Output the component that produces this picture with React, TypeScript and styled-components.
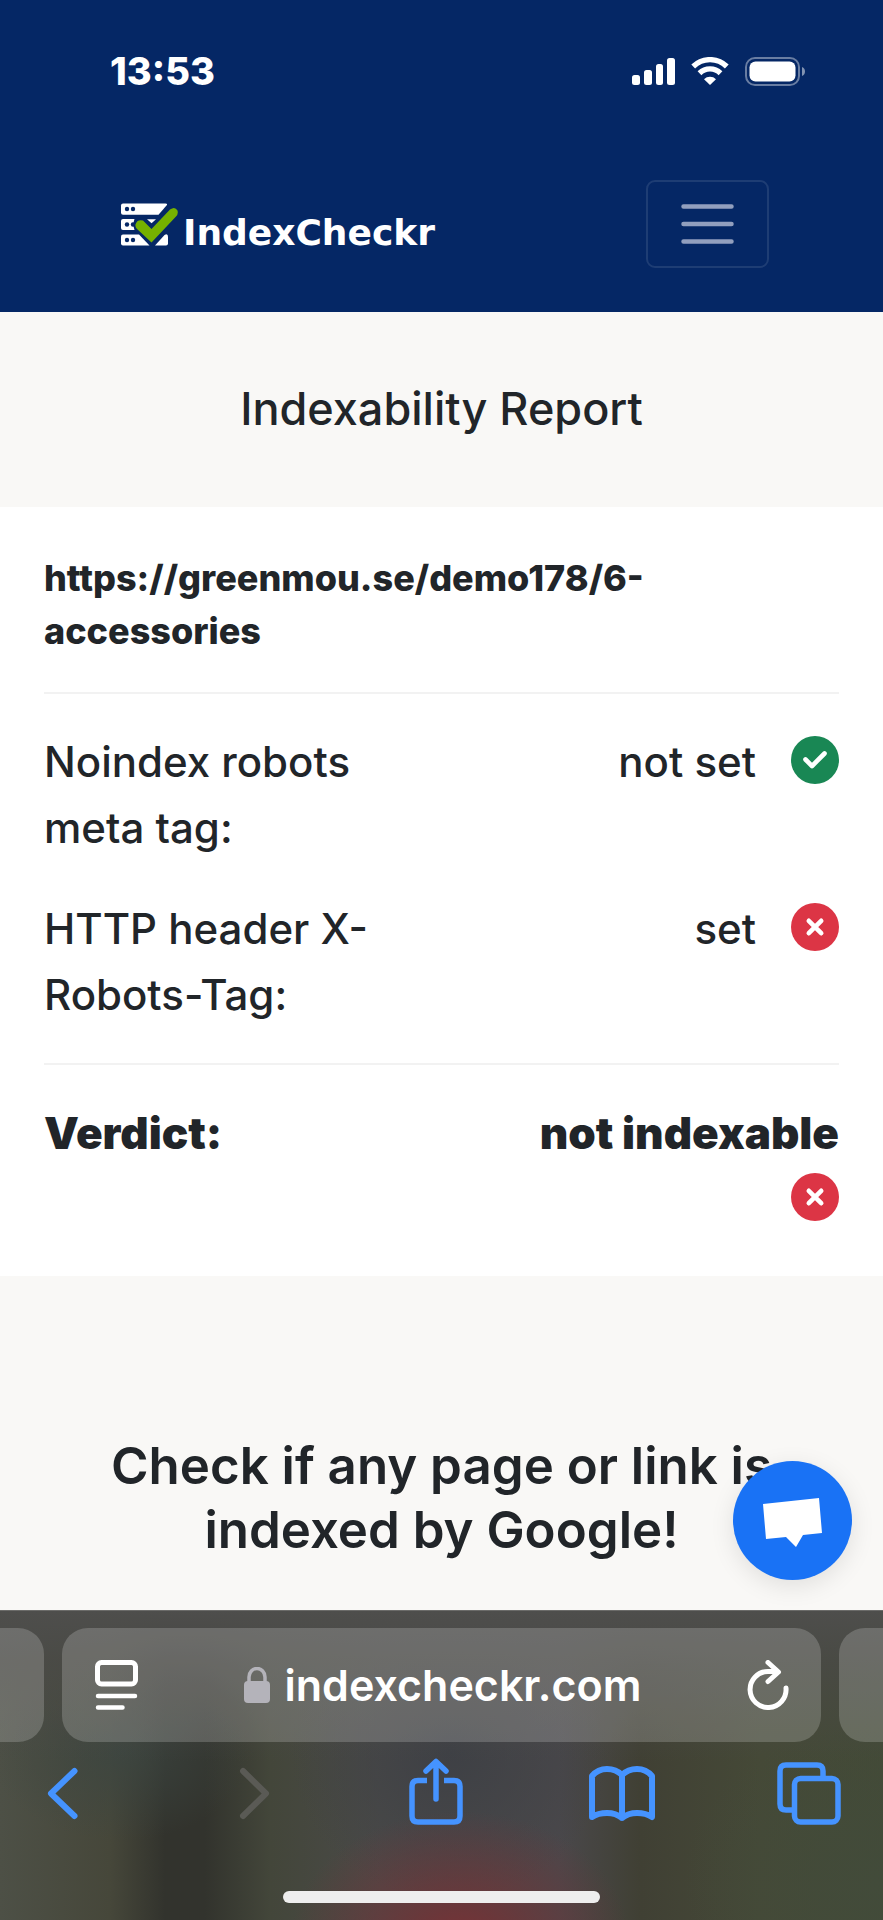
import React from "react";
import styled, { createGlobalStyle } from "styled-components";

const GlobalStyle = createGlobalStyle`
  * { box-sizing: border-box; }
  body { margin: 0; background: #f9f8f6; color: #212529; font-family: Inter, "Liberation Sans", sans-serif; }
  h1, h2, p, dl, dd, dt { margin: 0; }
  button { padding: 0; border: 0; background: none; color: inherit; font: inherit; }
  svg { display: block; flex: none; }
`;

const Page = styled.div`
  display: flex;
  flex-direction: column;
  min-height: 100vh;
`;

const Header = styled.header`
  background: #052765;
  color: #fff;
`;

const StatusBar = styled.div`
  display: flex;
  align-items: center;
  justify-content: space-between;
  padding: 47px 77px 0 110px;
`;

const Clock = styled.time`
  font-size: 38px;
  line-height: 48px;
  font-weight: 800;
`;

const StatusIcons = styled.div`
  display: flex;
  align-items: center;
  gap: 16px;
`;

const NavBar = styled.nav`
  display: flex;
  align-items: center;
  justify-content: space-between;
  padding: 85px 114px 44px 120px;
`;

const Brand = styled.a`
  display: flex;
  align-items: center;
  gap: 5px;
  color: #fff;
  text-decoration: none;
`;

const BrandName = styled.span`
  padding-top: 18px;
  font-family: "DejaVu Sans", sans-serif;
  font-size: 36px;
  line-height: 44px;
  font-weight: 700;
`;

const MenuButton = styled.button`
  display: grid;
  place-items: center;
  width: 123px;
  height: 88px;
  border: 2px solid rgba(255, 255, 255, 0.1);
  border-radius: 9px;
`;

const ReportTitle = styled.h1`
  padding: 69px 45px 70px;
  font-size: 45px;
  line-height: 56px;
  font-weight: 500;
  text-align: center;
`;

const Report = styled.main`
  padding: 45px 44px 55px;
  background: #fff;
`;

const CheckedUrl = styled.p`
  padding-bottom: 34px;
  border-bottom: 2px solid #f2f2f2;
  font-size: 36px;
  line-height: 53px;
  font-weight: 850;
`;

const Checks = styled.dl`
  display: grid;
  gap: 35px;
  padding: 35px 0;
  border-bottom: 2px solid #f2f2f2;
`;

const CheckRow = styled.div`
  display: grid;
  grid-template-columns: 1fr 1fr;
  font-size: 42px;
  line-height: 66px;
  font-weight: 500;
`;

const CheckValue = styled.dd`
  display: flex;
  justify-content: flex-end;
  gap: 35px;
`;

const BadgeBox = styled.span`
  padding-top: 7px;
`;

const Verdict = styled.dl`
  display: flex;
  justify-content: space-between;
  padding-top: 35px;
  font-size: 44px;
  line-height: 66px;
  font-weight: 900;
`;

const VerdictValue = styled.dd`
  display: flex;
  flex-direction: column;
  align-items: flex-end;
`;

const Promo = styled.section`
  position: relative;
  flex: 1;
  padding: 158px 88px 46px;
`;

const PromoTitle = styled.h2`
  max-width: 700px;
  margin: 0 auto;
  font-size: 51px;
  line-height: 64px;
  font-weight: 600;
  text-align: center;
`;

const ChatButton = styled.button`
  position: absolute;
  right: 31px;
  bottom: 30px;
  display: grid;
  place-items: center;
  width: 119px;
  height: 119px;
  border-radius: 50%;
  background: #1972f5;
  box-shadow: 0 6px 24px rgba(0, 0, 0, 0.1);
`;

const Browser = styled.footer`
  border-top: 1px solid #6b6b69;
  background:
    linear-gradient(to bottom, #4e4e4c 0, rgba(74, 74, 71, 0.8) 50px, rgba(60, 60, 55, 0) 150px),
    radial-gradient(170px 130px at 460px 330px, #783236 0, rgba(115, 50, 54, 0.8) 25%, rgba(90, 60, 62, 0) 100%),
    radial-gradient(160px 150px at 450px 140px, #3e4045 0, rgba(70, 70, 75, 0) 100%),
    radial-gradient(130px 90px at 120px 140px, rgba(60, 70, 66, 0.8) 0, rgba(60, 70, 66, 0) 100%),
    radial-gradient(200px 160px at 883px 270px, #424b3a 0, rgba(66, 75, 58, 0) 100%),
    linear-gradient(to right, #4d5046 0, #46473a 110px, #32332d 165px, #32332d 205px, #43463a 270px, #4a4a48 380px, #4a484b 560px, #404034 640px, #454937 760px, #434a37 100%);
`;

const Tabs = styled.div`
  display: grid;
  grid-template-columns: 44px 1fr 44px;
  gap: 18px;
  padding-top: 17px;
`;

const TabEdge = styled.div<{ $side: "left" | "right" }>`
  border-radius: ${(p) => (p.$side === "left" ? "0 26px 26px 0" : "26px 0 0 26px")};
  background: rgba(255, 255, 255, 0.19);
`;

const AddressBar = styled.div`
  display: flex;
  align-items: center;
  justify-content: space-between;
  height: 114px;
  padding: 0 32px 0 33px;
  border-radius: 26px;
  background: rgba(255, 255, 255, 0.19);
  color: #fff;
`;

const Address = styled.button`
  display: flex;
  align-items: center;
  gap: 15px;
  font-size: 43px;
  line-height: 56px;
  font-weight: 600;
`;

const Tools = styled.div`
  display: flex;
  align-items: center;
  justify-content: space-between;
  padding: 16px 41px 0 29px;
`;

const Tool = styled.button`
  display: grid;
  justify-content: center;
  width: 66px;
  color: #4593ff;
  &:disabled { color: #5a5a55; }
`;

const HomeBar = styled.div`
  width: 36%;
  height: 12px;
  margin: 63px auto 17px;
  border-radius: 6px;
  background: #eee;
`;

const Badge = ({ ok }: { ok?: boolean }) => (
  <BadgeBox>
    <svg width="48" height="48" viewBox="0 0 48 48" role="img" aria-label={ok ? "Passed" : "Failed"}>
      <circle cx="24" cy="24" r="24" fill={ok ? "#198754" : "#dc3545"} />
      <path
        d={ok ? "M14.500 23.500l6.500 6.500 12.500-12.500" : "M17.800 17.800l12.400 12.400M30.200 17.800l-12.400 12.400"}
        fill="none" stroke="#fff" strokeWidth="4.600" strokeLinecap="round" strokeLinejoin="round"
      />
    </svg>
  </BadgeBox>
);

const Signal = () => (
  <svg width="43" height="27" viewBox="0 0 43 27" fill="#fff">
    <rect y="17" width="8" height="10" rx="2.5" />
    <rect x="12" y="12" width="8" height="15" rx="2.5" />
    <rect x="24" y="6" width="7" height="21" rx="2.5" />
    <rect x="35" width="8" height="27" rx="2.5" />
  </svg>
);

const Wifi = () => (
  <svg width="38" height="28" viewBox="0 0 38 28" fill="none" stroke="#fff" strokeWidth="5.400">
    <path d="M2.200 9.500a24 24 0 0 1 33.600 0" />
    <path d="M8.500 16.200a15 15 0 0 1 21 0" />
    <path d="M13 22.200a8.500 8.500 0 0 1 12 0L19 28z" fill="#fff" stroke="none" />
  </svg>
);

const Battery = () => (
  <svg width="61" height="29" viewBox="0 0 61 29">
    <rect x="1" y="1" width="53" height="27" rx="9" fill="none" stroke="#fff" strokeOpacity=".4" strokeWidth="2" />
    <rect x="4.500" y="4.500" width="46" height="20" rx="6" fill="#fff" />
    <path d="M57 10c4 1 4 8 0 9z" fill="#fff" fillOpacity=".5" />
  </svg>
);

const Logo = () => (
  <svg width="58" height="43" viewBox="0 0 58 43">
    <g fill="#fff">
      <path d="M3 0.500H45.500Q48 0.500 46.500 2.500L38.500 11.800H3Q1 11.800 1 9.800V2.500Q1 0.500 3 0.500z" />
      <path d="M3 16H13L14.500 16 13 21.500 14.500 27H3Q1 27 1 25V18Q1 16 3 16z" />
      <path d="M27 16.200h9l-4.500 4z" />
      <path d="M3 31.500H19L29.500 42.500H3Q1 42.500 1 40.500V33.500Q1 31.500 3 31.500z" />
      <path d="M35 42.500 44.500 32Q48 30 48 34V40.500Q48 42.500 46 42.500z" />
    </g>
    <g fill="#052765">
      <circle cx="7" cy="6" r="2.200" /><circle cx="13" cy="6" r="2.200" />
      <circle cx="7" cy="21.500" r="2.200" /><circle cx="13" cy="21.500" r="2.200" />
      <circle cx="7" cy="37" r="2.200" /><circle cx="13" cy="37" r="2.200" />
    </g>
    <path d="M15.500 21.500Q17 16 23 17.500L31.500 26 50 6.500Q55 3 57.500 7.500 58.500 11 56 13.500L31.500 39.500 17 26Q15 24 15.500 21.500z" fill="#76b100" />
  </svg>
);

const MenuIcon = () => (
  <svg width="53" height="42" viewBox="0 0 53 42" stroke="#929fbe" strokeWidth="4.500" strokeLinecap="round">
    <path d="M2.500 3.500h48M2.500 21h48M2.500 38.500h48" />
  </svg>
);

export default function App() {
  return (
    <Page>
      <GlobalStyle />
      <Header>
        <StatusBar>
          <Clock>13:53</Clock>
          <StatusIcons><Signal /><Wifi /><Battery /></StatusIcons>
        </StatusBar>
        <NavBar>
          <Brand href="#"><Logo /><BrandName>IndexCheckr</BrandName></Brand>
          <MenuButton aria-label="Toggle navigation"><MenuIcon /></MenuButton>
        </NavBar>
      </Header>

      <ReportTitle>Indexability Report</ReportTitle>

      <Report>
        <CheckedUrl>https://greenmou.se/demo178/6-<wbr />accessories</CheckedUrl>
        <Checks>
          <CheckRow>
            <dt>Noindex robots meta tag:</dt>
            <CheckValue>not set <Badge ok /></CheckValue>
          </CheckRow>
          <CheckRow>
            <dt>HTTP header X-Robots-Tag:</dt>
            <CheckValue>set <Badge /></CheckValue>
          </CheckRow>
        </Checks>
        <Verdict>
          <dt>Verdict:</dt>
          <VerdictValue>not indexable<Badge /></VerdictValue>
        </Verdict>
      </Report>

      <Promo>
        <PromoTitle>Check if any page or link is indexed by Google!</PromoTitle>
        <ChatButton aria-label="Open chat">
          <svg width="59" height="53" viewBox="0 -4 59 53">
            <path d="M0 6 56 0 59 35 40 37 33 49 23 39 3 41z" fill="#fff" />
          </svg>
        </ChatButton>
      </Promo>

      <Browser>
        <Tabs>
          <TabEdge $side="left" />
          <AddressBar>
            <button aria-label="Page settings">
              <svg width="43" height="50" viewBox="0 0 43 50" fill="none" stroke="#fff" strokeWidth="5" strokeLinecap="round">
                <rect x="2.500" y="2.500" width="38" height="21.500" rx="4" />
                <path d="M3 36h37M3 47.500h24.500" strokeWidth="4.500" />
              </svg>
            </button>
            <Address>
              <svg width="26" height="36" viewBox="0 0 26 36" fill="#b4b3ba">
                <rect y="14" width="26" height="22" rx="4" />
                <path d="M5 16V10a8 8.500 0 0 1 16 0v6" fill="none" stroke="#b4b3ba" strokeWidth="3.500" />
              </svg>
              indexcheckr.com
            </Address>
            <button aria-label="Reload">
              <svg width="42" height="50" viewBox="0 0 42 50" fill="none" stroke="#fff" strokeWidth="5" strokeLinecap="round" strokeLinejoin="round">
                <path d="M39 28A18 18 0 1 1 21 11.500H30" />
                <path d="M21 2.500l10.500 9.500-10.500 9.500" />
              </svg>
            </button>
          </AddressBar>
          <TabEdge $side="right" />
        </Tabs>
        <Tools>
          <Tool aria-label="Back">
            <svg width="31" height="70" viewBox="0 0 31 70" fill="none" stroke="currentColor" strokeWidth="6" strokeLinecap="round" strokeLinejoin="round"><path d="M27.500 13L4 35.500 27.500 58" /></svg>
          </Tool>
          <Tool aria-label="Forward" disabled>
            <svg width="43" height="70" viewBox="-12 0 43 70" fill="none" stroke="currentColor" strokeWidth="6" strokeLinecap="round" strokeLinejoin="round"><path d="M4 13L27 35.500 4 58" /></svg>
          </Tool>
          <Tool aria-label="Share">
            <svg width="54" height="70" viewBox="0 0 54 70" fill="none" stroke="currentColor" strokeWidth="5.500">
              <path d="M18 22.500H9Q3 22.500 3 28.500V58Q3 64 9 64H45Q51 64 51 58V28.500Q51 22.500 45 22.500H35" />
              <path d="M27 41V4M17 13L27 3.500 37 13" strokeLinecap="round" strokeLinejoin="round" />
            </svg>
          </Tool>
          <Tool aria-label="Bookmarks">
            <svg width="66" height="70" viewBox="0 0 66 70" fill="none" stroke="currentColor" strokeWidth="6" strokeLinejoin="round" strokeLinecap="round">
              <path d="M33 17Q27 11 18 11T3 18V59Q9 55 18 55T33 60Q39 55 48 55T63 59V18Q57 11 48 11T33 17V60" />
            </svg>
          </Tool>
          <Tool aria-label="Tabs">
            <svg width="64" height="70" viewBox="0 0 64 70" fill="none" stroke="currentColor" strokeWidth="5.500">
              <path d="M15 52H9Q3 52 3 46V13Q3 7 9 7H40Q46 7 46 13V20" />
              <rect x="17.500" y="20.500" width="43.500" height="43.500" rx="6" />
            </svg>
          </Tool>
        </Tools>
        <HomeBar />
      </Browser>
    </Page>
  );
}
